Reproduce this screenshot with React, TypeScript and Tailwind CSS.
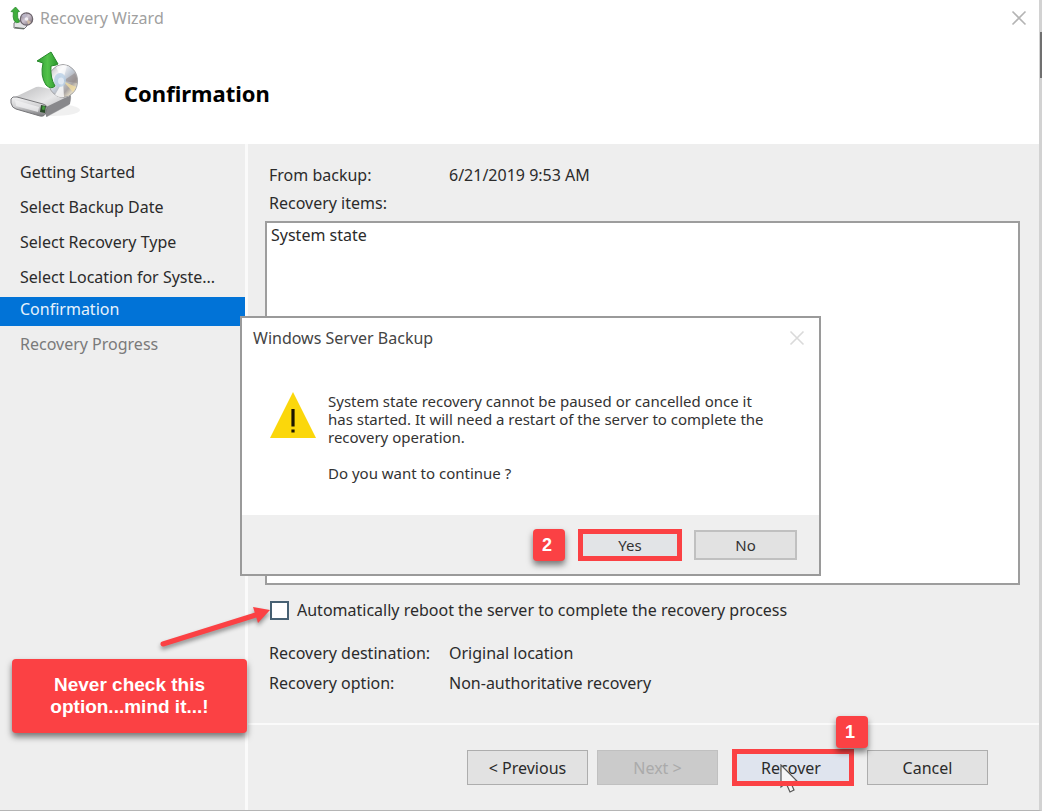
import React from "react";

function TitleIcon() {
  return (
    <svg className="size-6" viewBox="0 0 24 24" aria-hidden="true">
      <defs>
        <linearGradient id="title-disc" x1="0" y1="0" x2="1" y2="1">
          <stop offset="0" stopColor="#7a6f7c" />
          <stop offset="0.45" stopColor="#cfc6d2" />
          <stop offset="1" stopColor="#6d6068" />
        </linearGradient>
      </defs>
      <path d="M4 17 L8 14 L17 16 L17 20 L14 23 L4 22 Z" fill="#e3e3e5" stroke="#77777a" strokeWidth="1" />
      <path d="M5 21.5 L14 22.5" stroke="#5d6a5d" strokeWidth="1.2" />
      <circle cx="16.5" cy="13" r="6.2" fill="url(#title-disc)" stroke="#6c646c" strokeWidth="1.2" />
      <path d="M16.5 13 L11.5 10 A6 6 0 0 1 16 7.4 Z" fill="#b9b4c6" />
      <path d="M16.5 13 L21 16 A6 6 0 0 1 18 18.3 Z" fill="#d3bda6" />
      <circle cx="16.5" cy="13" r="1.8" fill="#f2eff4" />
      <path d="M1 5.5 L5.5 1 L9.5 5.5 L7.5 6 Q7 12 9.5 16 Q6 18 4 14.5 Q2.6 11 3.4 6 Z" fill="#3fae3c" stroke="#27882b" strokeWidth="0.8" strokeLinejoin="round" />
    </svg>
  );
}

function DriveIcon() {
  return (
    <svg className="size-[74px]" viewBox="0 0 74 74" aria-hidden="true">
      <defs>
        <linearGradient id="disc" x1="0" y1="0" x2="1" y2="1">
          <stop offset="0" stopColor="#a9a9ad" />
          <stop offset="0.3" stopColor="#f4f4f6" />
          <stop offset="0.5" stopColor="#c3cbd6" />
          <stop offset="0.7" stopColor="#a8a3a2" />
          <stop offset="0.85" stopColor="#efe6cd" />
          <stop offset="1" stopColor="#a6a6a6" />
        </linearGradient>
        <linearGradient id="arrow" x1="0" y1="0" x2="1" y2="0">
          <stop offset="0" stopColor="#2c9a30" />
          <stop offset="0.5" stopColor="#52c24a" />
          <stop offset="1" stopColor="#2b962e" />
        </linearGradient>
        <linearGradient id="drive-top" x1="0" y1="0" x2="1" y2="1">
          <stop offset="0" stopColor="#b9b9bb" />
          <stop offset="0.5" stopColor="#e8e8e9" />
          <stop offset="1" stopColor="#a0a0a3" />
        </linearGradient>
        <linearGradient id="drive-front" x1="0" y1="0" x2="0" y2="1">
          <stop offset="0" stopColor="#f3f3f4" />
          <stop offset="0.5" stopColor="#cfcfd1" />
          <stop offset="1" stopColor="#77777a" />
        </linearGradient>
      </defs>
      <ellipse cx="44" cy="60" rx="26" ry="6" fill="#000" opacity="0.06" />
      <path d="M3 48 L24 38 Q27 36 31 37 L58 43 Q62 45 61 50 L59 55 L37 67 L33 58 Z" fill="url(#drive-top)" />
      <path d="M36 57 L61 45 L60 54 L36 67 Z" fill="#88888b" />
      <path d="M3 47 Q0 48 1 53 Q2 58 6 59 L30 66 Q35 67 36 62 L37 58 Q37 55 33 54 L7 47 Z" fill="url(#drive-front)" stroke="#77777a" strokeWidth="1" />
      <path d="M5 50 L29 57 L28 62 L6 56 Z" fill="#f2f2f3" opacity="0.75" />
      <path d="M31 55 L36 56 L35 63 L30 62 Z" fill="#2b4b2a" />
      <path d="M32.5 56 L35 56.6 L34.5 60 L32 59.4 Z" fill="#43a23c" />
      <ellipse cx="53" cy="31" rx="14.5" ry="16.5" fill="url(#disc)" stroke="#a3a3a5" strokeWidth="1" />
      <path d="M53 31 L46 17 A15 16 0 0 1 57 15.5 Z" fill="#fff" opacity="0.65" />
      <path d="M53 31 L65 23 A14 16 0 0 1 67 33 Z" fill="#8a8080" opacity="0.5" />
      <path d="M53 31 L66 37 A14 16 0 0 1 63 42 Z" fill="#f0dca0" opacity="0.8" />
      <path d="M53 31 L45 45 A14 16 0 0 0 54 47 Z" fill="#fff" opacity="0.8" />
      <ellipse cx="50" cy="30" rx="6" ry="7" fill="#b8cfe6" opacity="0.8" />
      <ellipse cx="51" cy="31" rx="3" ry="3.5" fill="#dfe8f3" />
      <path d="M27 11 L41 2 L48 14 L46 15 L41 16 Q40 28 45 36 Q41 40 36 35 Q30 26 33 13 Z" fill="url(#arrow)" stroke="#27882b" strokeWidth="1" strokeLinejoin="round" />
    </svg>
  );
}

function CloseIcon() {
  return (
    <svg className="size-4" viewBox="0 0 16 16" aria-hidden="true">
      <path d="M1.5 1.5 L14.5 14.5 M14.5 1.5 L1.5 14.5" stroke="currentColor" strokeWidth="1.6" fill="none" />
    </svg>
  );
}

const STEP = "flex h-[35px] items-center pl-5";
const BUTTON = "h-[35px] w-[121px] border border-[#adadad] bg-[#e2e2e2] text-base";
const MARKER =
  "absolute z-10 flex size-8 items-center justify-center rounded bg-[#fb4144] pr-1 font-['Liberation_Sans',sans-serif] text-lg font-bold text-white shadow-[0_4px_6px_rgba(0,0,0,0.5)]";

function Sidebar() {
  return (
    <nav className="w-[245px] shrink-0 pt-[10px]" aria-label="Wizard steps">
      <ol>
        <li className={STEP}>Getting Started</li>
        <li className={STEP}>Select Backup Date</li>
        <li className={STEP}>Select Recovery Type</li>
        <li className={STEP}>Select Location for Syste...</li>
        <li aria-current="step" className="mt-[3px] flex h-[29px] items-center bg-[#0173d7] pb-1.5 pl-5 text-[#e6f2fc]">
          Confirmation
        </li>
        <li className="flex h-[35px] items-center pl-5 text-[#7a7a7a]">Recovery Progress</li>
      </ol>
    </nav>
  );
}

function BackupDialog() {
  return (
    <section
      role="dialog"
      aria-labelledby="dialog-title"
      className="absolute top-[316px] left-[240px] flex h-[260px] w-[581px] flex-col border-2 border-[#9a9a9a] bg-white"
    >
      <header className="flex h-10 items-center justify-between pr-3.5 pl-[11px]">
        <h2 id="dialog-title" className="text-base text-[#444]">Windows Server Backup</h2>
        <button aria-label="Close dialog" className="text-[#dadada]">
          <CloseIcon />
        </button>
      </header>
      <div className="flex flex-1 gap-[11px] pt-[34px] pl-[27px]">
        <svg className="size-[48px] shrink-0" viewBox="0 0 48 48" aria-hidden="true">
          <path d="M24 0 L47 46 H1 Z" fill="#fbd70b" />
          <path d="M22.4 17 H25.6 V34.5 H22.4 Z M22.4 37.5 H25.6 V40.5 H22.4 Z" fill="#1c1600" />
        </svg>
        <div className="flex flex-col gap-[18px] text-[15px] leading-[18px] text-[#333]">
          <p>
            System state recovery cannot be paused or cancelled once it
            <br />
            has started. It will need a restart of the server to complete the
            <br />
            recovery operation.
          </p>
          <p>Do you want to continue ?</p>
        </div>
      </div>
      <footer className="flex h-[59px] items-center justify-end gap-3 bg-[#efefef] pr-[22px]">
        <div className="relative">
          <span className={`${MARKER} top-0 -left-[45px]`}>2</span>
          <button className="h-8 w-[104px] border-[5px] border-[#fb4144] bg-[#e2e4e7] text-[15px] leading-5 text-[#333]">Yes</button>
        </div>
        <button className="h-[30px] w-[103px] border-2 border-[#c0c0c0] bg-[#e2e2e2] text-[15px] leading-5 text-[#333]">No</button>
      </footer>
    </section>
  );
}

export default function App() {
  return (
    <div className="relative flex min-h-screen flex-col border-r-3 border-b border-r-[#d2d2d2] border-b-[#b5b5b5] bg-[#eeeeee] font-['Noto_Sans','Open_Sans',sans-serif] text-base text-[#2b2b2b]">
      <header className="h-36 bg-white">
        <div className="flex h-9 items-center justify-between pr-3 pl-[10px]">
          <div className="flex items-center gap-1.5">
            <TitleIcon />
            <span className="text-[#a0a0a0]">Recovery Wizard</span>
          </div>
          <button aria-label="Close" className="text-[#b4b4b4]">
            <CloseIcon />
          </button>
        </div>
        <div className="flex items-center gap-10 pt-3.5 pl-[10px]">
          <DriveIcon />
          <h1 className="pt-3 text-[22px] font-bold text-black">Confirmation</h1>
        </div>
      </header>
      <div className="flex flex-1">
        <Sidebar />
        <div className="w-[3px] bg-[#fafafa]" />
        <main className="flex flex-1 flex-col">
          <div className="flex flex-1 flex-col pt-[17px] pr-[19px] pl-[17px]">
            <div className="flex h-7 items-center pl-1">
              <span className="w-[180px]">From backup:</span>
              <span>6/21/2019 9:53 AM</span>
            </div>
            <p id="items-label" className="flex h-7 items-center pl-1">Recovery items:</p>
            <ul aria-labelledby="items-label" className="mt-1 h-[364px] border-2 border-[#9d9d9d] bg-white px-1">
              <li>System state</li>
            </ul>
            <label className="mt-[11px] flex h-7 items-center gap-2 pl-[5px]">
              <input type="checkbox" className="size-[19px] appearance-none border-2 border-[#476173] bg-white" />
              Automatically reboot the server to complete the recovery process
            </label>
            <dl className="mt-3.5 grid grid-cols-[180px_1fr] pl-1 leading-[30px]">
              <dt>Recovery destination:</dt>
              <dd>Original location</dd>
              <dt>Recovery option:</dt>
              <dd>Non-authoritative recovery</dd>
            </dl>
          </div>
          <footer className="flex h-[87px] items-center justify-end gap-[9px] border-t-2 border-[#fafafa] pr-[51px]">
            <button className={BUTTON}>&lt; Previous</button>
            <button disabled className="h-[35px] w-[121px] border border-[#c0c0c0] bg-[#cbcbcb] text-[#aaaaaa]">Next &gt;</button>
            <div className="relative mr-1 ml-[5px]">
              <button className="block h-[37px] w-[122px] bg-[#dfe4ee] pr-1">Recover</button>
              <svg className="absolute top-[15px] left-[47px] h-8 w-6" viewBox="0 0 24 32" aria-hidden="true">
                <path d="M2 1 V23 L7 19 L11 28 L15 26 L11.5 18 L18 17 Z" fill="#f6f6f6" stroke="#555" strokeWidth="1.2" />
              </svg>
              <span className="pointer-events-none absolute inset-0 border-[5px] border-[#fb4144]" />
              <span className={`${MARKER} -top-[33px] -right-[14px]`}>1</span>
            </div>
            <button className={BUTTON}>Cancel</button>
          </footer>
        </main>
      </div>
      <BackupDialog />
      <svg className="absolute top-[600px] left-[155px] h-14 w-[120px] drop-shadow-[0_3px_2px_rgba(0,0,0,0.4)]" viewBox="0 0 120 56" aria-hidden="true">
        <path d="M8 44 L104 14" stroke="#fb4144" strokeWidth="5" strokeLinecap="round" />
        <path d="M98 7 L115 10 L103 23 Z" fill="#fb4144" />
      </svg>
      <aside className="absolute top-[659px] left-3 flex h-[74px] w-[235px] items-center justify-center rounded bg-[#fb4144] text-center font-['Liberation_Sans',sans-serif] text-[19px] leading-[22px] font-bold text-white shadow-[0_4px_6px_rgba(0,0,0,0.5)]">
        <p>
          Never check this
          <br />
          option...mind it...!
        </p>
      </aside>
      <div className="absolute top-8 -right-[3px] h-[46px] w-0.5 bg-[#707070]" />
    </div>
  );
}
